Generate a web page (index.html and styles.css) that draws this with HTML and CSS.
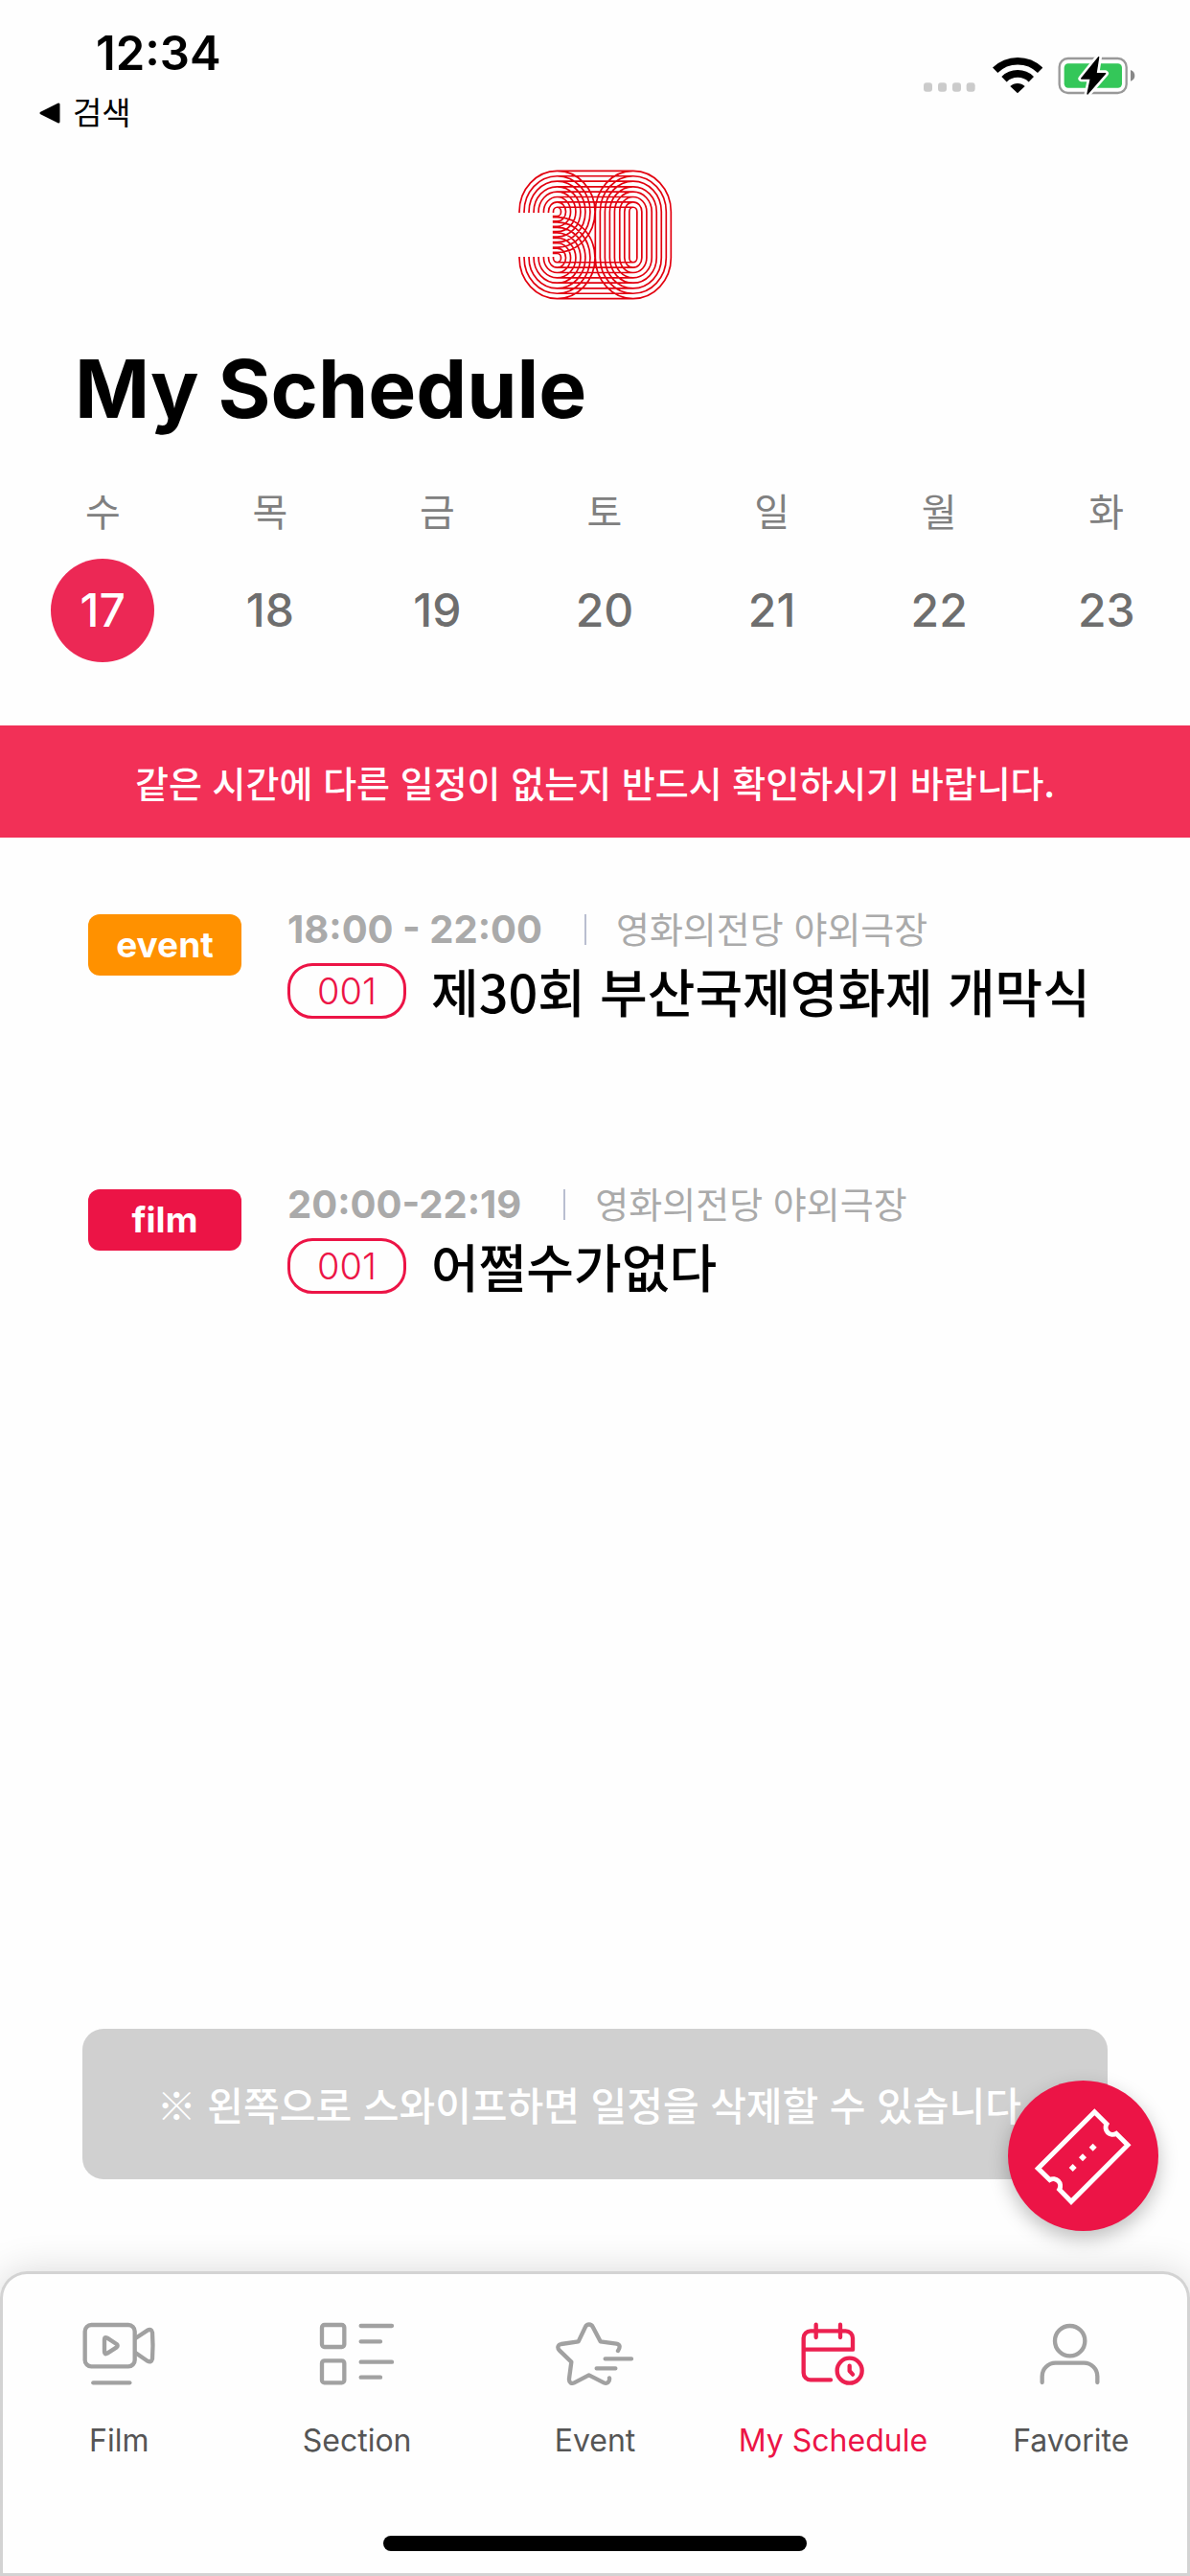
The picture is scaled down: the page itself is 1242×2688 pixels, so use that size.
FILE: index.html
```html
<!DOCTYPE html>
<html lang="ko">
<head>
    <meta charset="UTF-8">
    <meta name="viewport" content="width=device-width, initial-scale=1.0">
    <title>My Schedule</title>
    <link rel="stylesheet" href="styles.css">
</head>

<body>
    <header class="status-bar">
        <div class="status-left">
            <time class="clock">12:34</time>
            <a href="#" class="back">
                <svg width="24" height="24" viewBox="0 0 24 24"><path d="M21 3v18L3 12z" fill="#000" stroke="#000" stroke-width="3" stroke-linejoin="round"/></svg>
                <span>검색</span>
            </a>
        </div>
        <div class="status-icons">
            <svg width="56" height="42" viewBox="0 0 168 126">
                <g fill="#cbcbcb">
                    <rect x="0" y="88" width="27" height="28" rx="9"/>
                    <rect x="45" y="88" width="27" height="28" rx="9"/>
                    <rect x="90" y="88" width="27" height="28" rx="9"/>
                    <rect x="134" y="88" width="27" height="28" rx="9"/>
                </g>
            </svg>
            <svg width="52" height="42" viewBox="403 110 156 126">
                <path d="M411 159a101 101 0 0 1 141 0" fill="none" stroke="#000" stroke-width="23"/>
                <path d="M439 187a61 61 0 0 1 85 0" fill="none" stroke="#000" stroke-width="23"/>
                <path d="M458 209a33 33 0 0 1 46 0l-23 22z"/>
            </svg>
            <svg width="82" height="42" viewBox="610 110 246 126">
                <rect x="615" y="122" width="210" height="108" rx="27" fill="none" stroke="#999" stroke-width="7"/>
                <rect x="630" y="138" width="181" height="76" rx="13" fill="#34c759"/>
                <path d="M838 158q13 5 13 18t-13 17z" fill="#888"/>
                <path d="M738 118l-54 67h29l-10 48 56-64h-29z" stroke="#fefefe" stroke-width="20" stroke-linejoin="round"/>
                <path d="M738 118l-54 67h29l-10 48 56-64h-29z" stroke="#000" stroke-width="4" stroke-linejoin="round"/>
            </svg>
        </div>
    </header>

    <svg class="logo" id="logo" viewBox="60 48 484 412" role="img" aria-label="30"></svg>

    <h1>My Schedule</h1>

    <div class="week">
        <button class="day selected"><span class="weekday">수</span><span class="date">17</span></button>
        <button class="day"><span class="weekday">목</span><span class="date">18</span></button>
        <button class="day"><span class="weekday">금</span><span class="date">19</span></button>
        <button class="day"><span class="weekday">토</span><span class="date">20</span></button>
        <button class="day"><span class="weekday">일</span><span class="date">21</span></button>
        <button class="day"><span class="weekday">월</span><span class="date">22</span></button>
        <button class="day"><span class="weekday">화</span><span class="date">23</span></button>
    </div>

    <p class="banner">같은 시간에 다른 일정이 없는지 반드시 확인하시기 바랍니다.</p>

    <main>
        <ul class="schedule">
            <li class="item">
                <span class="badge event">event</span>
                <div class="info">
                    <div class="meta"><span class="time">18:00 - 22:00</span><span class="venue">영화의전당 야외극장</span></div>
                    <div class="title"><span class="code">001</span><h2>제30회 부산국제영화제 개막식</h2></div>
                </div>
            </li>
            <li class="item">
                <span class="badge film">film</span>
                <div class="info">
                    <div class="meta"><span class="time">20:00-22:19</span><span class="venue">영화의전당 야외극장</span></div>
                    <div class="title"><span class="code">001</span><h2>어쩔수가없다</h2></div>
                </div>
            </li>
        </ul>
        <p class="notice">※ 왼쪽으로 스와이프하면 일정을 삭제할 수 있습니다.</p>
    </main>

    <button class="fab" aria-label="Ticket">
        <svg width="157" height="157" viewBox="336 273 471 471">
            <path d="M607 371l38 38a22 22 0 0 0 30 30l36 36-177 177-37-38a22 22 0 0 0-30-30l-37-36z" fill="none" stroke="#fff" stroke-width="15"/>
            <g fill="#fff">
                <path d="M602 470l12 12-12 12-12-12z"/>
                <path d="M570 502l12 12-12 12-12-12z"/>
                <path d="M539 534l12 12-12 12-12-12z"/>
            </g>
        </svg>
    </button>

    <nav class="tabs">
        <a href="#" class="tab">
            <svg viewBox="0 0 252 204">
                <rect x="20" y="12" width="156" height="130" rx="20"/>
                <path d="M81 58q0-10 9-5l29 19q6 5 0 10l-29 19q-9 5-9-5z"/>
                <path d="M178 54l38-25q11-7 15 7 3 40 0 82-4 14-15 7l-38-26"/>
                <path d="M46 193h114"/>
            </svg>
            <span>Film</span>
        </a>
        <a href="#" class="tab">
            <svg viewBox="0 0 252 204">
                <rect x="15" y="12" width="70" height="69" rx="8"/>
                <rect x="15" y="124" width="70" height="69" rx="8"/>
                <path d="M137 15h97M137 64h61M137 128h97M137 176h61"/>
            </svg>
            <span>Section</span>
        </a>
        <a href="#" class="tab">
            <svg viewBox="0 0 252 204">
                <path d="M198 93c8-12 6-20-5-22l-50-7-24-46c-5-10-18-10-23 0L74 64l-54 8c-10 2-13 11-6 19l38 37-7 53c-1 12 8 16 16 12l46-24 47 24c10 5 19-3 17-15"/>
                <path d="M158 118h82M131 148h59"/>
            </svg>
            <span>Event</span>
        </a>
        <a href="#" class="tab active">
            <svg viewBox="0 0 252 204">
                <path d="M120 184H57a22 22 0 0 1-22-22V53a22 22 0 0 1 22-22h110a22 22 0 0 1 22 22v36H35"/>
                <path d="M74 11v40M150 11v40"/>
                <circle cx="179" cy="155" r="39"/>
                <path d="M179 140v16l10 11"/>
            </svg>
            <span>My Schedule</span>
        </a>
        <a href="#" class="tab">
            <svg viewBox="0 0 252 204">
                <circle cx="122" cy="62" r="47"/>
                <path d="M35 192v-19a42 42 0 0 1 42-42h89a42 42 0 0 1 42 42v19"/>
            </svg>
            <span>Favorite</span>
        </a>
        <div class="home-bar"></div>
    </nav>

    <script>
        const logo = document.getElementById("logo");
        const lines = 8;
        let d = "";

        // each pass draws one line of the 3 (two bowls) and one of the 0
        for (let i = 0; i < lines; i++) {
            const rx = 12 + Math.round(i * 15.2);
            const ry = 14 + Math.round(i * 16.1);

            d += `M${184 - rx} 185V182A${rx} ${ry} 0 0 1 184 ${182 - ry}A${rx} ${ry} 0 0 1 184 ${182 + ry}H170`;
            d += `M${184 - rx} 323V326A${rx} ${ry} 0 0 0 184 ${326 + ry}A${rx} ${ry} 0 0 0 184 ${326 - ry}H170`;
            d += `M184 ${182 - ry}H421A${rx} ${ry} 0 0 1 ${421 + rx} 182V326A${rx} ${ry} 0 0 1 421 ${326 + ry}H184`;
            d += `M421 ${182 - ry}A${rx} ${ry} 0 0 0 ${421 - rx} 182V326A${rx} ${ry} 0 0 0 421 ${326 + ry}`;
        }

        const path = document.createElementNS("http://www.w3.org/2000/svg", "path");
        path.setAttribute("d", d);
        logo.appendChild(path);
    </script>
</body>
</html>
```
FILE: styles.css
```css
* {
    box-sizing: border-box;
}
body {
    margin: 0;
    min-height: 100vh;
    display: flex;
    flex-direction: column;
    background-color: #fefefe;
    color: #000;
    font-family: Inter, "Noto Sans CJK KR", sans-serif;
}
a {
    color: inherit;
    text-decoration: none;
}
button {
    padding: 0;
    border: none;
    background: none;
    font-family: inherit;
    cursor: pointer;
}
.status-bar {
    display: flex;
    justify-content: space-between;
    padding: 26px 56px 0 40px;
    height: 150px;
}
.status-left {
    display: flex;
    flex-direction: column;
}
.clock {
    padding-left: 60px;
    font-size: 49px;
    font-weight: 600;
    line-height: 60px;
}
.back {
    display: flex;
    align-items: center;
    gap: 12px;
    font-size: 33px;
    line-height: 64px;
}
.status-icons {
    display: flex;
    gap: 16px;
    padding-top: 31px;
}
.logo {
    align-self: center;
    width: 162px;
    height: 138px;
    margin-top: 26px;
}
.logo path {
    fill: none;
    stroke: #e2000f;
    stroke-width: 5;
}
h1 {
    margin: 44px 78px 0;
    font-size: 84px;
    font-weight: 700;
    line-height: 96px;
}
.week {
    display: flex;
    margin-top: 57px;
    padding-left: 20px;
}
.day {
    flex: 1;
    display: flex;
    flex-direction: column;
    align-items: center;
    gap: 24px;
}
.weekday {
    color: #808080;
    font-size: 40px;
    line-height: 48px;
}
.date {
    width: 108px;
    border-radius: 50%;
    color: #6e6e6e;
    font-size: 48px;
    font-weight: 500;
    line-height: 108px;
}
.selected .date {
    background-color: #ec2855;
    color: #fff;
}
.banner {
    margin: 66px 0 0;
    background-color: #f23057;
    color: #fff;
    font-family: "Noto Sans CJK KR", sans-serif;
    font-size: 38px;
    font-weight: 500;
    line-height: 117px;
    text-align: center;
}
main {
    flex: 1;
    display: flex;
    flex-direction: column;
    padding: 80px 86px 96px;
}
.schedule {
    display: flex;
    flex-direction: column;
    gap: 178px;
    margin: 0;
    padding: 0;
    list-style: none;
}
.item {
    display: flex;
    align-items: flex-start;
    gap: 48px;
    padding-left: 6px;
}
.badge {
    width: 160px;
    border-radius: 12px;
    color: #fff;
    font-size: 37px;
    font-weight: 700;
    line-height: 64px;
    text-align: center;
}
.event {
    background-color: #ff9100;
}
.film {
    background-color: #ec1446;
}
.meta {
    display: flex;
    align-items: center;
    height: 32px;
    margin-bottom: 19px;
    color: #aaa;
    font-size: 40px;
    line-height: 32px;
}
.time {
    font-weight: 700;
}
.venue {
    margin-left: 44px;
    padding-left: 31px;
    border-left: 2px solid #b9bed0;
    font-size: 38px;
}
.title {
    display: flex;
    align-items: center;
    gap: 26px;
    height: 58px;
}
.code {
    width: 124px;
    border: 3px solid #ec1446;
    border-radius: 26px;
    color: #ec1446;
    font-size: 38px;
    font-weight: 300;
    line-height: 52px;
    text-align: center;
}
h2 {
    margin: 0;
    font-family: "Noto Sans CJK KR", sans-serif;
    font-size: 54px;
    font-weight: 500;
    line-height: 58px;
}
.notice {
    margin: auto 0 0;
    border-radius: 22px;
    background-color: #d0d0d0;
    color: #fff;
    font-family: "Noto Sans CJK KR", sans-serif;
    font-size: 41px;
    font-weight: 500;
    line-height: 157px;
    text-align: center;
}
.fab {
    position: fixed;
    right: 33px;
    bottom: 360px;
    width: 157px;
    height: 157px;
    border-radius: 50%;
    background-color: #ec1446;
    box-shadow: 0 8px 20px rgba(0, 0, 0, 0.25);
}
.fab svg {
    display: block;
}
.tabs {
    display: flex;
    flex-wrap: wrap;
    justify-content: center;
    padding: 52px 0 26px;
    border-radius: 28px 28px 0 0;
    background-color: #fefefe;
    box-shadow: inset 0 0 0 3px #d3d3d3, 0 0 40px rgba(0, 0, 0, 0.15);
}
.tab {
    width: 20%;
    display: flex;
    flex-direction: column;
    align-items: center;
    gap: 37px;
    color: #555;
    font-size: 32px;
    line-height: 40px;
}
.tab svg {
    width: 84px;
    height: 68px;
    fill: none;
    stroke: #a1a1a1;
    stroke-width: 13;
    stroke-linecap: round;
    stroke-linejoin: round;
}
.active {
    color: #ec1446;
}
.active svg {
    stroke: #ec2050;
}
.home-bar {
    width: 442px;
    height: 16px;
    margin-top: 79px;
    border-radius: 8px;
    background-color: #000;
}
```
